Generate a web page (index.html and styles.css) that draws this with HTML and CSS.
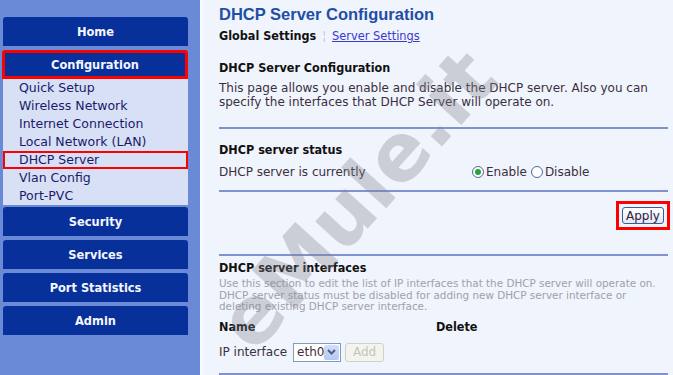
FILE: index.html
```html
<!DOCTYPE html>
<html lang="en">
<head>
  <meta charset="UTF-8">
  <title>DHCP Server Configuration</title>
  <link rel="stylesheet" href="styles.css">
</head>
<body>
  <div class="page">
    <div class="sidebar">
      <div class="menu-btn">Home</div>
      <div class="menu-btn marked">Configuration</div>
      <ul class="submenu">
        <li>Quick Setup</li>
        <li>Wireless Network</li>
        <li>Internet Connection</li>
        <li>Local Network (LAN)</li>
        <li class="marked">DHCP Server</li>
        <li>Vlan Config</li>
        <li>Port-PVC</li>
      </ul>
      <div class="menu-btn">Security</div>
      <div class="menu-btn">Services</div>
      <div class="menu-btn">Port Statistics</div>
      <div class="menu-btn">Admin</div>
    </div>
    <div class="content">
      <h1>DHCP Server Configuration</h1>
      <div class="tabs">
        <span class="tab-active">Global Settings</span>
        <span class="tab-sep">¦</span>
        <a href="#" class="tab-link">Server Settings</a>
      </div>

      <h2 class="intro-head">DHCP Server Configuration</h2>
      <p class="intro">This page allows you enable and disable the DHCP server. Also you can specify the interfaces that DHCP Server will operate on.</p>

      <div class="section status">
        <h2>DHCP server status</h2>
        <div class="status-row">
          <span class="status-label">DHCP server is currently</span>
          <span class="radios">
            <span class="radio checked"></span><span>Enable</span>
            <span class="radio second"></span><span>Disable</span>
          </span>
        </div>
      </div>

      <div class="section apply-row">
        <span class="marked-box"><button class="btn">Apply</button></span>
      </div>

      <div class="section ifaces">
        <h2>DHCP server interfaces</h2>
        <p class="hint">Use this section to edit the list of IP interfaces that the DHCP server will operate on. DHCP server status must be disabled for adding new DHCP server interface or deleting existing DHCP server interface.</p>
        <div class="cols">
          <span class="col-name">Name</span>
          <span>Delete</span>
        </div>
        <div class="iface-row">
          <span>IP interface</span>
          <span class="select">eth0<span class="select-arrow"><svg width="9" height="6" viewBox="0 0 9 6"><path d="M1 1 L4.5 4.5 L8 1" fill="none" stroke="#4d6185" stroke-width="2"/></svg></span></span>
          <button class="btn" disabled>Add</button>
        </div>
      </div>
      <div class="section last"></div>

      <div class="watermark">eMule.it</div>
    </div>
  </div>
</body>
</html>
```

FILE: styles.css
```css
body {
  margin: 0;
  font-family: "DejaVu Sans", Verdana, sans-serif;
  font-size: 12px;
  color: #3a3040;
  background: #f0f4fc;
  overflow: hidden;
}
.page {
  display: flex;
  height: 375px;
}
.sidebar {
  width: 200px;
  flex-shrink: 0;
  background: #6a8ad8;
  padding-top: 17px;
  box-sizing: border-box;
}
.menu-btn {
  width: 185px;
  height: 29px;
  margin: 0 0 4px 3px;
  box-sizing: border-box;
  background: #08309a;
  border-radius: 3px 3px 0 0;
  color: #f4f6ff;
  font-family: "DejaVu Sans Condensed", "DejaVu Sans", sans-serif;
  font-weight: bold;
  font-size: 12.7px;
  display: flex;
  align-items: center;
  justify-content: center;
}
.menu-btn.marked {
  border: 3px solid #ff0000;
  margin-left: 2px;
  width: 186px;
  margin-bottom: 0;
}
.submenu {
  list-style: none;
  margin: 0 0 2px 3px;
  padding: 0;
  width: 185px;
  background: #d8e0f5;
  font-size: 12.5px;
}
.submenu li {
  height: 18px;
  line-height: 18px;
  padding-left: 16px;
  color: #1a1a6a;
  box-sizing: border-box;
}
.submenu li.marked {
  border: 2px solid #ff0000;
  line-height: 14px;
  padding-left: 14px;
}
.content {
  flex: 1;
  position: relative;
  border-left: 3px solid #f8faff;
  padding: 4px 5px 0 16px;
  overflow: hidden;
}
h1 {
  margin: 0;
  font-family: "Liberation Sans", Arial, sans-serif;
  font-size: 16.5px;
  color: #1f4ea6;
  line-height: 20px;
}
.tabs {
  margin-top: 5px;
  line-height: 14px;
}
.tab-active {
  font-family: "DejaVu Sans Condensed", "DejaVu Sans", sans-serif;
  font-weight: bold;
  font-size: 12.5px;
  color: #111;
}
.tab-sep {
  color: #c8c8c8;
  margin: 0 2px;
}
.tab-link {
  color: #3a3acc;
  font-size: 11.4px;
}
h2 {
  margin: 0;
  font-family: "DejaVu Sans Condensed", "DejaVu Sans", sans-serif;
  font-size: 12.5px;
  font-weight: bold;
  color: #111;
  line-height: 14px;
}
.intro-head {
  margin-top: 18px;
}
.intro {
  margin: 6px 0 0;
  line-height: 14px;
}
.section {
  border-top: 2px solid #7f93cf;
  margin-top: 18px;
}
.status {
  padding-top: 14px;
  height: 47px;
}
.status-row {
  display: flex;
  margin-top: 8px;
}
.status-label {
  width: 253px;
}
.radios {
  display: flex;
  align-items: center;
  gap: 2px;
}
.radio {
  width: 12px;
  height: 12px;
  border: 1px solid #4f6a9a;
  border-radius: 50%;
  background: #fff;
  box-sizing: border-box;
  display: inline-flex;
  align-items: center;
  justify-content: center;
}
.radio.second {
  margin-left: 2px;
}
.radio.checked::after {
  content: "";
  width: 6px;
  height: 6px;
  border-radius: 50%;
  background: #2aa03a;
}
.apply-row {
  margin-top: 0;
  height: 64px;
  display: flex;
  justify-content: flex-end;
  align-items: flex-start;
  padding-top: 9px;
  box-sizing: border-box;
}
.marked-box {
  border: 3px solid #ff0000;
  padding: 3px;
  margin-right: -2px;
}
.btn {
  display: block;
  font-family: "DejaVu Sans", Verdana, sans-serif;
  font-size: 12px;
  color: #2a2040;
  width: 42px;
  height: 17px;
  padding: 0;
  border: 1px solid #3c5a99;
  border-radius: 3px;
  background: linear-gradient(#ffffff, #e4e8f2);
}
.btn:disabled {
  color: #c4c4b8;
  border-color: #d2d2c4;
  background: #f4f4ee;
  height: 19px;
  width: 39px;
}
.ifaces {
  margin-top: 0;
  padding-top: 5px;
}
.hint {
  margin: 3px 0 0;
  font-size: 10.4px;
  line-height: 11.5px;
  color: #a0a0aa;
}
.cols {
  display: flex;
  margin-top: 7px;
  font-family: "DejaVu Sans Condensed", "DejaVu Sans", sans-serif;
  font-size: 12.5px;
  font-weight: bold;
  color: #111;
  line-height: 14px;
}
.col-name {
  width: 217px;
}
.iface-row {
  display: flex;
  align-items: center;
  gap: 4px;
  margin-top: 9px;
}
.select {
  width: 48px;
  height: 19px;
  box-sizing: border-box;
  border: 1px solid #7f9db9;
  background: #fff;
  display: flex;
  align-items: center;
  padding-left: 3px;
  justify-content: space-between;
  margin-left: 2px;
}
.select-arrow {
  width: 15px;
  height: 15px;
  margin-right: 1px;
  background: linear-gradient(#d2defa, #b4c8f2);
  border-radius: 2px;
  display: flex;
  align-items: center;
  justify-content: center;
}
.last {
  margin-top: 11px;
}
.watermark {
  position: absolute;
  left: -30px;
  top: 164px;
  width: max-content;
  transform: rotate(-48deg);
  font-family: "DejaVu Sans", Verdana, sans-serif;
  font-weight: bold;
  font-size: 80px;
  line-height: 72px;
  color: rgba(130, 130, 140, 0.33);
  pointer-events: none;
  white-space: nowrap;
}
```
